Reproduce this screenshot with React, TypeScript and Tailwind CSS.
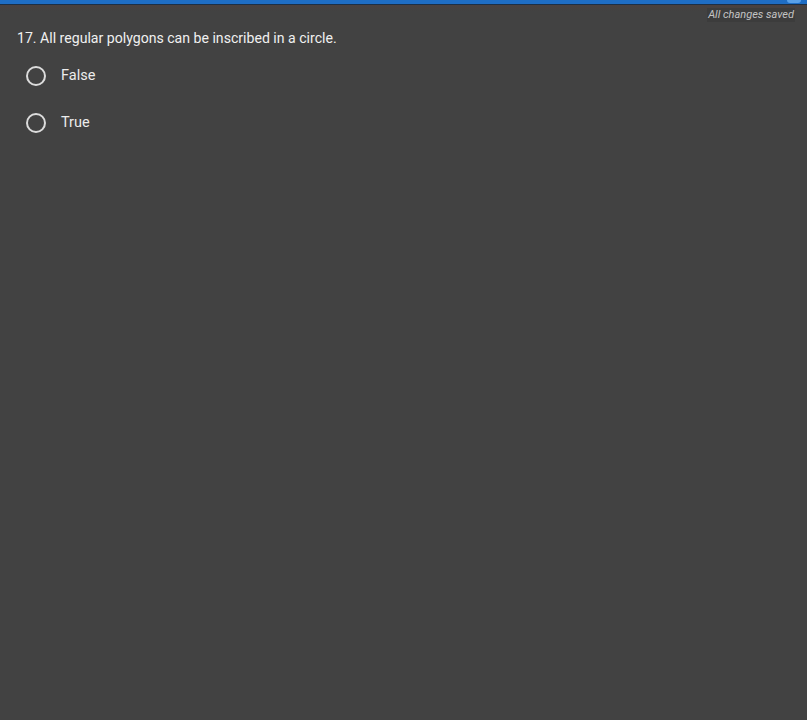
import React from "react";

function Radio({ label }: { label: string }) {
  return (
    <div className="flex items-center h-[24px]">
      <div className="ml-[26px] w-[20px] h-[20px] rounded-full border-2 border-[#dcdcdc]" />
      <span className="ml-[15px] text-[14.5px] text-[#ececec]">{label}</span>
    </div>
  );
}

export default function App() {
  return (
    <div
      className="w-[807px] h-[720px] bg-[#424242] flex flex-col"
      style={{ fontFamily: "Roboto, 'Liberation Sans', sans-serif" }}
    >
      <div className="h-[4px] bg-[#1f6dc4] relative">
        <div className="absolute right-[6px] top-0 w-[14px] h-[3px] rounded-b bg-[#5aa0e8]" />
      </div>
      <div className="h-[1px] bg-[#1d2f45]" />
      <div className="bg-gradient-to-b from-[#4a403f] to-[#424242] h-[6px]" />
      <div className="flex justify-end pr-[12px] -mt-[3px]">
        <span className="text-[11px] italic text-[#c4c4c4] bg-[#3c3c3c] px-[1px] leading-[14px]">
          All changes saved
        </span>
      </div>
      <div className="pl-[17px] mt-[6px] text-[14.1px] text-[#f0f0f0] leading-[20px]">
        17. All regular polygons can be inscribed in a circle.
      </div>
      <div className="mt-[16px] flex flex-col gap-[23px]">
        <Radio label="False" />
        <Radio label="True" />
      </div>
    </div>
  );
}
